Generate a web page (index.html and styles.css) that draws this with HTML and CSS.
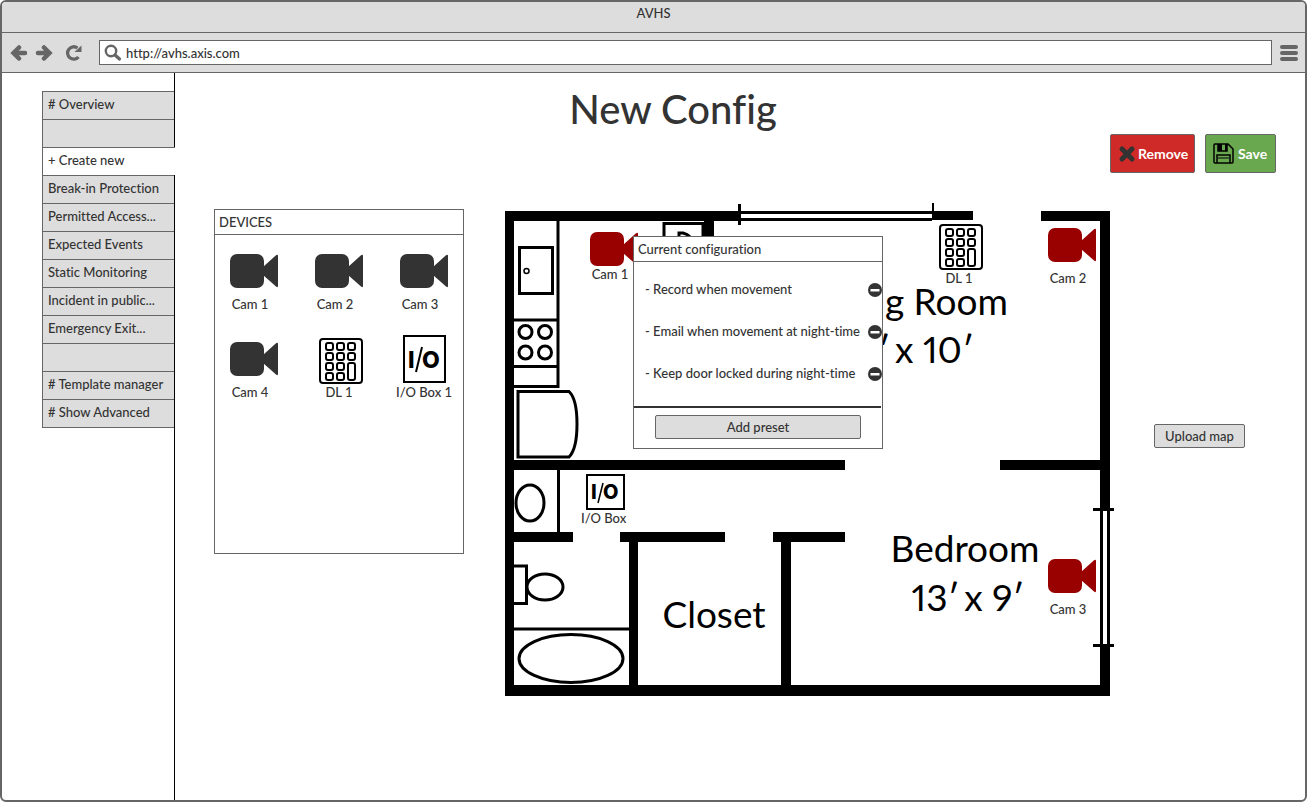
FILE: index.html
```html
<!DOCTYPE html>
<html lang="en">
<head>
<meta charset="utf-8">
<meta name="viewport" content="width=device-width, initial-scale=1">
<title>AVHS</title>
<link rel="stylesheet" href="styles.css">
</head>
<body>
<svg class="sprite" aria-hidden="true">
  <symbol id="camera" viewBox="0 0 48 34">
    <rect width="34" height="34" rx="7"/>
    <path d="M33 13L46 1.300Q48 0 48 2V32Q48 34 46 32.500L33 21Z"/>
  </symbol>
  <symbol id="keypad" viewBox="0 0 44 46">
    <g fill="#fff" stroke="#000" stroke-width="2">
      <rect x="1" y="1" width="42" height="44" rx="3"/>
      <rect x="7" y="5" width="7" height="7" rx="2"/><rect x="18" y="5" width="7" height="7" rx="2"/><rect x="29" y="5" width="7" height="7" rx="2"/>
      <rect x="7" y="15" width="7" height="7" rx="2"/><rect x="18" y="15" width="7" height="7" rx="2"/><rect x="29" y="15" width="7" height="7" rx="2"/>
      <rect x="7" y="25" width="7" height="7" rx="2"/><rect x="18" y="25" width="7" height="7" rx="2"/><rect x="29" y="25" width="7" height="17" rx="2"/>
      <rect x="7" y="35" width="7" height="7" rx="2"/><rect x="18" y="35" width="7" height="7" rx="2"/>
    </g>
  </symbol>
  <symbol id="minus" viewBox="0 0 14 14">
    <circle cx="7" cy="7" r="7" fill="#333"/><rect x="2.500" y="6" width="9" height="2.500" fill="#fff"/>
  </symbol>
</svg>

<div class="browser">
  <header class="titlebar">AVHS</header>
  <div class="toolbar">
    <button class="tool" type="button" aria-label="Back"><svg width="18" height="16" viewBox="0 0 18 16"><path d="M9 2.500L3.500 8 9 13.500M5 8h10" fill="none" stroke="#666" stroke-width="4.500" stroke-linecap="round"/></svg></button>
    <button class="tool forward" type="button" aria-label="Forward"><svg width="18" height="16" viewBox="0 0 18 16"><path d="M9 2.500L14.500 8 9 13.500M13 8H3" fill="none" stroke="#666" stroke-width="4.500" stroke-linecap="round"/></svg></button>
    <button class="tool reload" type="button" aria-label="Reload"><svg width="18" height="16" viewBox="0 0 18 16"><path d="M12.500 3A6.200 6.200 0 1 0 13.500 12" fill="none" stroke="#666" stroke-width="3.300"/><path d="M16.500 0.500v6.500H9.500Z" fill="#666"/></svg></button>
    <label class="address">
      <svg width="18" height="18" viewBox="0 0 18 18" aria-hidden="true"><circle cx="7" cy="7" r="5.200" fill="none" stroke="#666" stroke-width="2.400"/><path d="M11 11l4.500 4" stroke="#666" stroke-width="3.200" stroke-linecap="round"/></svg>
      <input type="text" value="http://avhs.axis.com" aria-label="Address">
    </label>
    <button class="tool menu" type="button" aria-label="Menu"><svg width="18" height="16" viewBox="0 0 18 16"><path d="M2 2h14M2 8h14M2 14h14" stroke="#666" stroke-width="4" stroke-linecap="round"/></svg></button>
  </div>

  <div class="page">
    <nav class="sidebar">
      <ul class="tabs">
        <li class="tab"><a href="#overview"># Overview</a></li>
        <li class="tab"></li>
        <li class="tab active"><a href="#new" aria-current="page">+ Create new</a></li>
        <li class="tab"><a href="#break-in">Break-in Protection</a></li>
        <li class="tab"><a href="#access">Permitted Access...</a></li>
        <li class="tab"><a href="#expected">Expected Events</a></li>
        <li class="tab"><a href="#static">Static Monitoring</a></li>
        <li class="tab"><a href="#incident">Incident in public...</a></li>
        <li class="tab"><a href="#exit">Emergency Exit...</a></li>
        <li class="tab"></li>
        <li class="tab"><a href="#templates"># Template manager</a></li>
        <li class="tab"><a href="#advanced"># Show Advanced</a></li>
      </ul>
    </nav>

    <main class="main">
      <h1 class="heading">New Config</h1>
      <div class="actions">
        <button class="action remove" type="button"><svg width="18" height="18" viewBox="0 0 18 18" aria-hidden="true"><path d="M4 4l10 10M14 4L4 14" stroke="#333" stroke-width="5" stroke-linecap="round"/></svg>Remove</button>
        <button class="action save" type="button"><svg width="21" height="21" viewBox="0 0 21 21" aria-hidden="true" fill="none" stroke="#000" stroke-width="1.500"><path d="M1 2Q1 1 2 1H15L20 6V19Q20 20 19 20H2Q1 20 1 19Z"/><path d="M5 1V8H14V1M4 20V12H17V20"/><path d="M5 1h4v7H5zM12 1h2v7h-2z" fill="#000" stroke="none"/><path d="M5 15h11" stroke-width="1"/></svg>Save</button>
      </div>

      <div class="workspace">
        <section class="devices">
          <h2 class="panel-title">DEVICES</h2>
          <ul class="device-grid">
            <li class="device camera"><span class="device-icon"><svg width="48" height="34"><use href="#camera"/></svg></span><span class="name">Cam 1</span></li>
            <li class="device camera"><span class="device-icon"><svg width="48" height="34"><use href="#camera"/></svg></span><span class="name">Cam 2</span></li>
            <li class="device camera"><span class="device-icon"><svg width="48" height="34"><use href="#camera"/></svg></span><span class="name">Cam 3</span></li>
            <li class="device camera"><span class="device-icon"><svg width="48" height="34"><use href="#camera"/></svg></span><span class="name">Cam 4</span></li>
            <li class="device lock"><span class="device-icon"><svg width="44" height="46"><use href="#keypad"/></svg></span><span class="name">DL 1</span></li>
            <li class="device"><span class="device-icon"><svg width="43" height="48" viewBox="0 0 43 48"><rect x="1" y="1" width="41" height="46" fill="#fff" stroke="#000" stroke-width="2"/><text class="io-mark" y="33" font-size="23"><tspan x="5">I</tspan><tspan x="19">O</tspan></text><path d="M19 12L13 37" stroke="#000" stroke-width="2"/></svg></span><span class="name">I/O Box 1</span></li>
          </ul>
        </section>

        <div class="map-column">
          <div class="map">
            <svg class="plan" width="610" height="492" viewBox="504 204 610 492" role="img" aria-label="Floor plan">
              <g fill="#000">
                <path d="M505 211H739V221H714V236H704V221H514V460H845V470H514V532H573V542H514V685H629V542H620V532H725V542H638V685H781V542H773V532H845V542H791V685H1100V470H1000V460H1100V221H1041V211H1110V696H505Z"/>
                <path d="M932 211H973V220H932ZM739 211H932V214H739ZM739 218H932V221H739ZM738 204H741V225H738ZM932 203H934V214H932Z"/>
                <path d="M1093 508H1114V511H1093ZM1093 644H1114V647H1093Z"/>
              </g>
              <path d="M1103 511H1107V644H1103Z" fill="#fff"/>
              <g fill="none" stroke="#000" stroke-width="3">
                <path d="M558 221V386.500H514M514 320H558M514 366.500H558M558.500 470V532"/>
                <rect x="519.500" y="247.500" width="33" height="46"/>
                <circle cx="526.500" cy="271" r="2.500" stroke-width="1.500"/>
                <circle cx="525.500" cy="332" r="6.500"/><circle cx="545" cy="332" r="6.500"/>
                <circle cx="525.500" cy="352.500" r="6.500"/><circle cx="545" cy="352.500" r="6.500"/>
                <path d="M518 391.500H569Q577 399 577 424T569 457H518Z"/>
                <ellipse cx="530" cy="503" rx="14" ry="18"/>
                <path d="M514 566H526.500V603.500H514"/>
                <ellipse cx="545" cy="587" rx="18" ry="13"/>
                <path d="M514 629H630"/>
                <ellipse cx="571" cy="658.500" rx="52" ry="24"/>
                <rect x="664" y="223.500" width="39" height="30"/>
                <path d="M679 250V233H683Q692 235 692 244"/>
              </g>
              <g class="rooms">
                <text x="1008" y="315" text-anchor="end">Living Room</text>
                <text x="974" y="363" text-anchor="end">15′&#8201;x 10′</text>
                <text x="965" y="562" text-anchor="middle">Bedroom</text>
                <text x="968" y="611" text-anchor="middle">13′&#8201;x 9′</text>
                <text x="714" y="628" text-anchor="middle">Closet</text>
              </g>
            </svg>
            <div class="marker cam-1"><svg width="48" height="34"><use href="#camera"/></svg><span class="name">Cam 1</span></div>
            <div class="marker cam-2"><svg width="48" height="34"><use href="#camera"/></svg><span class="name">Cam 2</span></div>
            <div class="marker cam-3"><svg width="48" height="34"><use href="#camera"/></svg><span class="name">Cam 3</span></div>
            <div class="marker door-1"><svg width="44" height="46"><use href="#keypad"/></svg><span class="name">DL 1</span></div>
            <div class="marker io-1"><svg width="39" height="36" viewBox="0 0 39 36"><rect x="1" y="1" width="37" height="34" fill="#fff" stroke="#000" stroke-width="2"/><text class="io-mark" y="25" font-size="20"><tspan x="5">I</tspan><tspan x="17">O</tspan></text><path d="M17 9L12 29" stroke="#000" stroke-width="1.500"/></svg><span class="name">I/O Box</span></div>

            <section class="popover">
              <h2 class="panel-title">Current configuration</h2>
              <ul class="presets">
                <li class="preset">- Record when movement<button class="drop" type="button" aria-label="Remove preset"><svg width="14" height="14"><use href="#minus"/></svg></button></li>
                <li class="preset">- Email when movement at night-time<button class="drop" type="button" aria-label="Remove preset"><svg width="14" height="14"><use href="#minus"/></svg></button></li>
                <li class="preset">- Keep door locked during night-time<button class="drop" type="button" aria-label="Remove preset"><svg width="14" height="14"><use href="#minus"/></svg></button></li>
              </ul>
              <div class="popover-footer"><button class="plain" type="button">Add preset</button></div>
            </section>
          </div>
        </div>

        <button class="plain upload" type="button">Upload map</button>
      </div>
    </main>
  </div>
</div>
</body>
</html>
```

FILE: styles.css
```css
* { box-sizing: border-box; }
body { margin: 0; background: #fff; color: #333; font: 500 13px/16px Lato, "Open Sans", sans-serif; font-variant-ligatures: none; }
ul { list-style: none; margin: 0; padding: 0; }
svg { display: block; flex: none; }
button, input { font: inherit; color: inherit; }
.sprite { position: absolute; width: 0; height: 0; }

.browser { display: flex; flex-direction: column; min-height: 100vh; border: 2px solid #666; border-radius: 6px; overflow: hidden; }
.titlebar { height: 31px; padding-top: 3px; background: #ddd; border-bottom: 1px solid #666; text-align: center; }
.toolbar { display: flex; align-items: center; height: 40px; padding: 0 7px 0 8px; background: #ddd; border-bottom: 1px solid #666; }
.tool { flex: none; padding: 0; border: 0; background: none; }
.forward { margin-left: 7px; }
.reload { margin: 0 16px 0 12px; }
.menu { margin-left: 8px; }
.address { display: flex; flex: 1; align-items: center; height: 25px; padding-left: 4px; background: #fff; border: 1px solid #666; }
.address input { flex: 1; min-width: 0; padding: 0 4px; border: 0; outline: 0; background: none; }

.page { display: flex; flex: 1; }
.sidebar { flex: none; width: 173px; padding: 18px 0 0 40px; border-right: 1px solid #000; }
.tab { height: 28px; padding: 4px 0 0 5px; background: #ddd; border: 1px solid #666; border-width: 1px 0 0 1px; white-space: nowrap; }
.tab:last-child { height: 29px; border-bottom-width: 1px; }
.tab a { color: inherit; text-decoration: none; }
.tab.active { margin-right: -1px; background: #fff; }

.main { flex: 1; padding: 12px 60px 40px 39px; }
.heading { margin: 0 113px 1px 0; font-size: 40px; line-height: 48px; font-weight: 500; text-align: center; }
.actions { display: flex; justify-content: flex-end; gap: 10px; margin: 0 -31px 31px 0; }
.action { display: flex; align-items: center; gap: 2px; height: 39px; padding: 0 5px 0 7px; border: 1px solid #666; border-radius: 2px; color: #fff; font-size: 14px; font-weight: 700; }
.remove { min-width: 85px; background: #cf2a27; }
.save { min-width: 71px; gap: 4px; background: #6aa84f; }

.workspace { display: flex; align-items: flex-start; gap: 40px; }
.devices { flex: none; width: 250px; min-height: 345px; margin-top: 5px; border: 1px solid #666; }
.panel-title { margin: 0; padding: 4px; border-bottom: 1px solid #666; font-size: 13px; line-height: 16px; font-weight: 500; }
.device-grid { display: grid; grid-template-columns: repeat(3, 1fr); gap: 22px 13px; padding: 11px 3px; }
.device { display: flex; flex-direction: column; align-items: center; white-space: nowrap; }
.device-icon { display: flex; align-items: center; height: 50px; fill: #333; }
.lock .device-icon { padding: 4px 0 0 4px; }
.camera .name { padding-right: 8px; }
.io-mark { font-family: Inter, sans-serif; font-weight: 800; fill: #000; }

.map-column { flex: 1 0 610px; }
.map { position: relative; width: 610px; }
.plan { overflow: visible; }
.rooms { font-family: Lato, "Open Sans", sans-serif; font-size: 37px; font-weight: 400; font-variant-numeric: proportional-nums; fill: #000; }
.marker { position: absolute; display: flex; flex-direction: column; align-items: center; gap: 8px; fill: #900; white-space: nowrap; }
.marker .name { padding-right: 8px; }
.cam-1 { left: 86px; top: 28px; gap: 0; }
.cam-2 { left: 544px; top: 24px; }
.cam-3 { left: 544px; top: 355px; }
.door-1 { left: 435px; top: 20px; gap: 0; }
.io-1 { left: 77px; top: 270px; gap: 0; }
.door-1 .name, .io-1 .name { padding-right: 4px; }

.popover { position: absolute; left: 129px; top: 32px; width: 250px; background: #fff; border: 1px solid #666; }
.presets { display: grid; gap: 26px; padding: 19px 0 25px 11px; }
.preset { display: flex; align-items: center; justify-content: space-between; height: 16px; white-space: nowrap; }
.drop { padding: 2px 0 0; border: 0; background: none; }
.popover-footer { margin-right: 1px; padding: 7px 20px 9px 21px; border-top: 2px solid #333; }
.plain { display: block; width: 100%; height: 24px; padding: 0; border: 1px solid #666; border-radius: 2px; background: #ddd; }
.upload { flex: none; width: 91px; margin-top: 220px; }
```
